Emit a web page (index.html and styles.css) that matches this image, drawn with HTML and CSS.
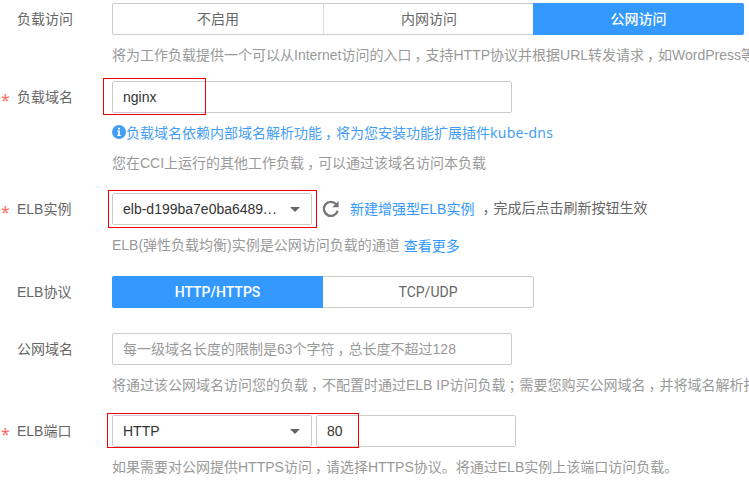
FILE: index.html
```
<!DOCTYPE html>
<html lang="zh-CN">
<head>
<meta charset="utf-8">
<title>负载访问</title>
<link rel="stylesheet" href="styles.css">
</head>
<body>
<main class="form">
  <div class="row row-access">
    <div class="label">负载访问</div>
    <div class="field">
      <div class="segments three"><span class="seg">不启用</span><span class="seg">内网访问</span><span class="seg active">公网访问</span></div>
      <p class="help">将为工作负载提供一个可以从Internet访问的入口<span class="comma">，</span>支持HTTP协议并根据URL转发请求<span class="comma">，</span>如WordPress等</p>
    </div>
  </div>
  <div class="row row-domain">
    <div class="label required">负载域名</div>
    <div class="field">
      <div class="input">nginx</div>
      <p class="help notice"><svg class="info" viewBox="0 0 14 14"><circle cx="7" cy="7" r="7" fill="#459ef5"/><path d="M5.3 5.6h2.6v4.5h1v1H5.2v-1h1V6.6h-.9zM6.1 2.8h1.8v1.7H6.1z" fill="#fff"/></svg>负载域名依赖内部域名解析功能<span class="comma">，</span>将为您安装功能扩展插件<span class="plugin">kube-dns</span></p>
      <p class="help second">您在CCI上运行的其他工作负载<span class="comma">，</span>可以通过该域名访问本负载</p>
      <div class="mark mark-domain"></div>
    </div>
  </div>
  <div class="row row-instance">
    <div class="label required">ELB实例</div>
    <div class="field">
      <div class="controls">
        <div class="input select"><span>elb-d199ba7e0ba6489<span class="dots">...</span></span></div>
        <svg class="refresh" viewBox="0 0 18 18"><path d="M14.2 4.3A7 7 0 1 0 15.6 10.8" fill="none" stroke="#757575" stroke-width="2.4"/><path d="M16.6 1v6.2h-6.4z" fill="#757575"/></svg>
        <a class="link create">新建增强型ELB实例</a>
        <span class="after"><span class="comma">，</span>完成后点击刷新按钮生效</span>
      </div>
      <p class="help">ELB(弹性负载均衡)实例是公网访问负载的通道<a class="link more">查看更多</a></p>
      <div class="mark mark-instance"></div>
    </div>
  </div>
  <div class="row row-protocol">
    <div class="label">ELB协议</div>
    <div class="field">
      <div class="segments two"><span class="seg active">HTTP/HTTPS</span><span class="seg">TCP/UDP</span></div>
    </div>
  </div>
  <div class="row row-public">
    <div class="label">公网域名</div>
    <div class="field">
      <div class="input placeholder">每一级域名长度的限制是63个字符<span class="comma">，</span>总长度不超过128</div>
      <p class="help">将通过该公网域名访问您的负载<span class="comma">，</span>不配置时通过ELB IP访问负载<span class="comma">；</span>需要您购买公网域名<span class="comma">，</span>并将域名解析指</p>
    </div>
  </div>
  <div class="row row-port">
    <div class="label required">ELB端口</div>
    <div class="field">
      <div class="controls">
        <div class="input select">HTTP</div>
        <div class="input port">80</div>
      </div>
      <p class="help">如果需要对公网提供HTTPS访问<span class="comma">，</span>请选择HTTPS协议。将通过ELB实例上该端口访问负载。</p>
      <div class="mark mark-port"></div>
    </div>
  </div>
</main>
</body>
</html>
```

FILE: styles.css
```
* { box-sizing: border-box; }
body {
  margin: 0;
  overflow: hidden;
  background: #fff;
  color: #666;
  font: 14px/20px "Liberation Sans", "Noto Sans CJK SC", sans-serif;
}
.form { padding-top: 3px; width: 749px; height: 485px; overflow: hidden; }
.row { display: grid; grid-template-columns: 112px 1fr; }
.row-access { height: 78px; }
.row-domain { height: 112px; }
.row-instance { height: 83px; }
.row-protocol { height: 57px; }
.row-public { height: 82px; }
.row-port { height: 70px; }
.label { position: relative; height: 32px; padding-left: 17px; line-height: 32px; }
.required::before {
  content: "*";
  position: absolute;
  left: 1px;
  top: 3px;
  color: #ff6a63;
  font: 16px/32px "Noto Sans", sans-serif;
}
.field { position: relative; min-width: 0; }
.segments {
  display: flex;
  height: 32px;
  border: 1px solid #ccc;
  border-radius: 2px;
  font-family: Roboto, "Noto Sans CJK SC", sans-serif;
}
.three { width: 632px; }
.two { width: 422px; }
.seg { flex: 1; line-height: 31px; text-align: center; }
.seg + .seg { border-left: 1px solid #ddd; }
.seg.active {
  flex: 0 0 211px;
  margin: -1px;
  border: 0;
  border-radius: 0 2px 2px 0;
  background: #39f;
  color: #fff;
  font-weight: 500;
  line-height: 32px;
}
.two .seg.active { margin-right: 0; border-radius: 2px 0 0 2px; }
.two .seg + .seg { border-left: 0; }
.input {
  width: 400px;
  height: 32px;
  padding-left: 10px;
  border: 1px solid #ccc;
  border-radius: 2px;
  color: #333;
  line-height: 30px;
  white-space: nowrap;
}
.placeholder { color: #999; }
.controls { display: flex; align-items: center; }
.select { display: flex; justify-content: space-between; width: 200px; padding-right: 11px; }
.select::after {
  content: "";
  align-self: center;
  border: 5px solid transparent;
  border-top-color: #666;
  border-bottom: 0;
}
.dots { letter-spacing: 0.8px; }
.port { margin-left: 4px; width: 200px; }
.help { margin: 10px 0 0; height: 20px; color: #999; white-space: nowrap; }
.second { margin-top: 10px; }
.notice { display: flex; align-items: center; color: #459ef5; }
.info { width: 14px; height: 14px; margin-top: -2px; }
.plugin { font-family: "Noto Sans", sans-serif; letter-spacing: 0.25px; }
.comma { display: inline-block; width: 14px; text-indent: 3px; }
.refresh { width: 18px; height: 18px; margin-left: 10px; }
.link { color: #39f; }
.create { margin-left: 10px; }
.after { margin-left: 5px; margin-top: -2px; }
.more { position: relative; top: 1px; margin-left: 4px; }
.mark { position: absolute; border: 1px solid #f00000; pointer-events: none; }
.mark-domain { left: -9px; top: -3px; width: 103px; height: 37px; }
.mark-instance { left: -4px; top: -3px; width: 209px; height: 38px; }
.mark-port { left: -5px; top: -2px; width: 252px; height: 35px; }
```
